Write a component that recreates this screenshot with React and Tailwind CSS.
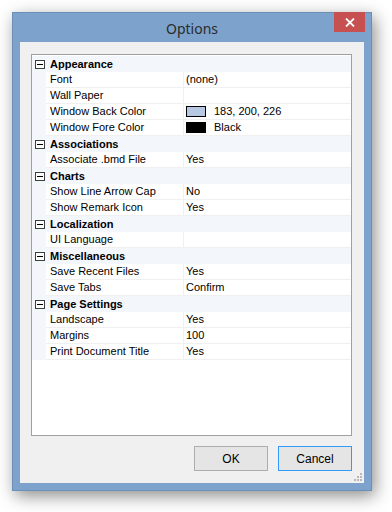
import React from "react";

const sections = [
  {
    title: "Appearance",
    rows: [
      { label: "Font", value: "(none)" },
      { label: "Wall Paper", value: "" },
      { label: "Window Back Color", value: "183, 200, 226", swatch: "bg-[#b7c8e2]" },
      { label: "Window Fore Color", value: "Black", swatch: "bg-black" },
    ],
  },
  { title: "Associations", rows: [{ label: "Associate .bmd File", value: "Yes" }] },
  {
    title: "Charts",
    rows: [
      { label: "Show Line Arrow Cap", value: "No" },
      { label: "Show Remark Icon", value: "Yes" },
    ],
  },
  { title: "Localization", rows: [{ label: "UI Language", value: "" }] },
  {
    title: "Miscellaneous",
    rows: [
      { label: "Save Recent Files", value: "Yes" },
      { label: "Save Tabs", value: "Confirm" },
    ],
  },
  {
    title: "Page Settings",
    rows: [
      { label: "Landscape", value: "Yes" },
      { label: "Margins", value: "100" },
      { label: "Print Document Title", value: "Yes" },
    ],
  },
];

function MinusBox() {
  return (
    <div className="w-[10px] h-[9px] border border-[#3c3c3c] flex items-center justify-center bg-white">
      <div className="w-[6px] h-px bg-black" />
    </div>
  );
}

function Category({ title }) {
  return (
    <div className="flex h-4 items-center bg-[#f3f6fb]">
      <div className="w-[14px] shrink-0 flex justify-center pl-px">
        <MinusBox />
      </div>
      <span className="pl-1 font-bold text-black leading-none">{title}</span>
    </div>
  );
}

function Row({ row }) {
  return (
    <div className="flex h-4 bg-[#f3f6fb]">
      <div className="w-[14px] shrink-0" />
      <div className="w-[137px] shrink-0 bg-white border-b border-[#f0f0f0] pl-1 flex items-center text-black">
        {row.label}
      </div>
      <div className="w-px bg-[#f0f0f0]" />
      <div className="flex-1 bg-white border-b border-[#f0f0f0] flex items-center pl-[2px] text-black">
        {row.swatch && (
          <div className={"w-5 h-[11px] border border-black mr-2 " + row.swatch} />
        )}
        {row.value}
      </div>
    </div>
  );
}

export default function App() {
  return (
    <div className="w-[392px] h-[512px] bg-white pl-3 pt-3" style={{ fontFamily: "'Liberation Sans', Arial, sans-serif" }}>
      <div className="w-[360px] h-[479px] bg-[#7da3cc] border border-[#6c8fb8] flex flex-col shadow-[3px_5px_16px_rgba(0,0,0,0.45)]">
        {/* title bar */}
        <div className="h-[29px] shrink-0 flex items-start relative">
          <div className="flex-1 text-center pt-[5px] text-[14px] text-[#2b2b2b]" style={{ fontFamily: "'Noto Sans', sans-serif" }}>
            Options
          </div>
          <div className="absolute right-[6px] top-[-1px] w-[31px] h-[20px] bg-[#c75050] flex items-center justify-center">
            <svg width="10" height="9" viewBox="0 0 10 9">
              <path d="M1 0.5 L9 8.5 M9 0.5 L1 8.5" stroke="white" strokeWidth="1.8" />
            </svg>
          </div>
        </div>

        {/* client */}
        <div className="mx-[7px] mb-[7px] flex-1 bg-[#f0f0f0] flex flex-col text-[11px] relative">
          <div className="mt-3 ml-[11px] w-[321px] h-[382px] border border-[#a0a0a0] bg-white pt-[1px] flex flex-col">
            {sections.map((s) => (
              <div key={s.title}>
                <Category title={s.title} />
                {s.rows.map((r) => (
                  <Row key={r.label} row={r} />
                ))}
              </div>
            ))}
          </div>

          <div className="flex justify-end gap-[10px] mt-[10px] pr-[12px]">
            <div className="w-[74px] h-[25px] border border-[#adadad] bg-[#e5e5e5] flex items-center justify-center text-[12px] text-black">
              OK
            </div>
            <div className="w-[74px] h-[25px] border border-[#3399ff] bg-[#e5e5e5] flex items-center justify-center text-[12px] text-black">
              Cancel
            </div>
          </div>

          {/* size grip */}
          <div className="absolute right-[2px] bottom-[2px] grid grid-cols-3 gap-px w-[8px] h-[8px]">
            <span />
            <span />
            <span className="bg-[#b8b8b8] w-[2px] h-[2px]" />
            <span />
            <span className="bg-[#b8b8b8] w-[2px] h-[2px]" />
            <span className="bg-[#b8b8b8] w-[2px] h-[2px]" />
            <span className="bg-[#b8b8b8] w-[2px] h-[2px]" />
            <span className="bg-[#b8b8b8] w-[2px] h-[2px]" />
            <span className="bg-[#b8b8b8] w-[2px] h-[2px]" />
          </div>
        </div>
      </div>
    </div>
  );
}
